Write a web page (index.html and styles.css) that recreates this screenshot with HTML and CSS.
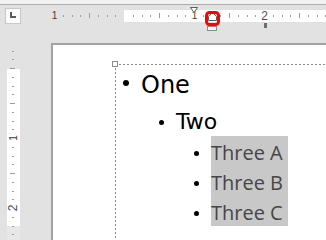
FILE: index.html
```html
<!DOCTYPE html>
<html lang="en">
<head>
    <meta charset="UTF-8">
    <title>Bullet list</title>
    <link rel="stylesheet" href="styles.css">
</head>
<body>
    <div class="titlebar"></div>

    <div class="ruler-row">
        <div class="corner">
            <div class="tab-selector"><span class="tab-l"></span></div>
        </div>
        <svg class="h-ruler" width="275" height="38" viewBox="51 5 275 38">
            <rect x="124" y="10" width="202" height="12" fill="#fff"/>
            <g fill="#9c9c9c">
                <rect x="63" y="15" width="1" height="2"/>
                <rect x="72" y="15" width="1" height="2"/>
                <rect x="80" y="15" width="1" height="2"/>
                <rect x="89" y="13" width="1" height="5"/>
                <rect x="98" y="15" width="1" height="2"/>
                <rect x="107" y="15" width="1" height="2"/>
                <rect x="115" y="15" width="1" height="2"/>
                <rect x="133" y="15" width="1" height="2"/>
                <rect x="142" y="15" width="1" height="2"/>
                <rect x="150" y="15" width="1" height="2"/>
                <rect x="159" y="13" width="1" height="5"/>
                <rect x="168" y="15" width="1" height="2"/>
                <rect x="177" y="15" width="1" height="2"/>
                <rect x="185" y="15" width="1" height="2"/>
                <rect x="203" y="15" width="1" height="2"/>
                <rect x="220" y="15" width="1" height="2"/>
                <rect x="229" y="13" width="1" height="5"/>
                <rect x="238" y="15" width="1" height="2"/>
                <rect x="247" y="15" width="1" height="2"/>
                <rect x="255" y="15" width="1" height="2"/>
                <rect x="273" y="15" width="1" height="2"/>
                <rect x="282" y="15" width="1" height="2"/>
                <rect x="290" y="15" width="1" height="2"/>
                <rect x="299" y="13" width="1" height="5"/>
                <rect x="308" y="15" width="1" height="2"/>
                <rect x="317" y="15" width="1" height="2"/>
                <rect x="325" y="15" width="1" height="2"/>
            </g>
            <g class="ruler-digits" text-anchor="middle">
                <text class="digit-one" x="54.5" y="19">1</text>
                <text class="digit-one" x="194.5" y="19">1</text>
                <text x="264.5" y="20">2</text>
            </g>
            <!-- first line indent -->
            <polygon points="190.5,7.5 197.5,7.5 194,12.5" fill="#fff" stroke="#5e5e5e"/>
            <!-- hanging indent, highlighted -->
            <polygon points="208.5,20.5 208.5,16.5 212.5,12.5 216.5,16.5 216.5,20.5" fill="#fff" stroke="#5e5e5e"/>
            <rect x="207.5" y="26.5" width="9" height="4" fill="#f4f4f4" stroke="#8a8a8a"/>
            <rect x="206.5" y="12.5" width="12" height="12" rx="3" fill="none" stroke="#f00" stroke-width="3"/>
            <rect x="264" y="23" width="3" height="5" fill="#6e6e6e"/>
        </svg>
    </div>

    <div class="workspace">
        <svg class="v-ruler" width="51" height="197" viewBox="0 43 51 197">
            <rect x="7" y="69" width="13" height="157" fill="#fff"/>
            <rect x="7" y="226" width="13" height="14" fill="#e7e7e7"/>
            <g fill="#9c9c9c">
                <rect x="12" y="51" width="2" height="1"/>
                <rect x="12" y="59" width="2" height="1"/>
                <rect x="10" y="68" width="5" height="1"/>
                <rect x="12" y="77" width="2" height="1"/>
                <rect x="12" y="86" width="2" height="1"/>
                <rect x="12" y="94" width="2" height="1"/>
                <rect x="10" y="103" width="5" height="1"/>
                <rect x="12" y="112" width="2" height="1"/>
                <rect x="12" y="121" width="2" height="1"/>
                <rect x="12" y="129" width="2" height="1"/>
                <rect x="12" y="147" width="2" height="1"/>
                <rect x="12" y="156" width="2" height="1"/>
                <rect x="12" y="164" width="2" height="1"/>
                <rect x="10" y="173" width="5" height="1"/>
                <rect x="12" y="182" width="2" height="1"/>
                <rect x="12" y="191" width="2" height="1"/>
                <rect x="12" y="199" width="2" height="1"/>
                <rect x="12" y="217" width="2" height="1"/>
                <rect x="12" y="226" width="2" height="1"/>
                <rect x="12" y="234" width="2" height="1"/>
            </g>
            <g class="ruler-digits" text-anchor="middle">
                <text class="digit-one" x="13" y="141.5" transform="rotate(-90 13 138)">1</text>
                <text x="13" y="212" transform="rotate(-90 13 208)">2</text>
            </g>
        </svg>

        <div class="page">
            <div class="text-box">
                <span class="handle"></span>

                <div class="item level-1">
                    <span class="dot"></span>
                    <span class="label">One</span>
                </div>
                <div class="item level-2">
                    <span class="dot"></span>
                    <span class="label">Two</span>
                </div>
                <div class="item level-3">
                    <span class="dot"></span>
                    <span class="label">Three A</span>
                </div>
                <div class="item level-3">
                    <span class="dot"></span>
                    <span class="label">Three B</span>
                </div>
                <div class="item level-3">
                    <span class="dot"></span>
                    <span class="label">Three C</span>
                </div>
            </div>
        </div>
    </div>
</body>
</html>
```

FILE: styles.css
```css
body {
    margin: 0;
    width: 326px;
    height: 240px;
    overflow: hidden;
    background-color: #e2e2e2;
    font-family: "DejaVu Sans", sans-serif;
}

.titlebar {
    height: 4px;
    background-color: #f1f1f1;
    border-bottom: 1px solid #ababab;
}

.ruler-row {
    display: flex;
    height: 38px;
}

.corner {
    width: 51px;
    flex: none;
}

.tab-selector {
    width: 16px;
    height: 16px;
    box-sizing: border-box;
    margin: 3px 0 0 5px;
    padding: 3px 0 0 4px;
    border: 1px solid #c8c8c8;
    background-color: #fbfbfb;
}

.tab-l {
    display: block;
    width: 6px;
    height: 6px;
    box-sizing: border-box;
    border-left: 2px solid #5a5a5a;
    border-bottom: 2px solid #5a5a5a;
}

.h-ruler,
.v-ruler {
    display: block;
    flex: none;
}

.ruler-digits {
    font-family: "Liberation Sans", sans-serif;
    font-size: 12px;
    fill: #505050;
}

.ruler-digits .digit-one {
    font-size: 10px;
    fill: #3c3c3c;
}

.workspace {
    display: flex;
    height: 197px;
    overflow: hidden;
}

.page {
    flex: 1;
    background-color: #fff;
    border-top: 2px solid #a3a3a3;
    border-left: 2px solid #a3a3a3;
}

.text-box {
    position: relative;
    height: 170px;
    margin: 19px 0 0 62px;
    padding-top: 6px;
    background:
        repeating-linear-gradient(to right, #8c8c8c 0 2px, transparent 2px 4px) 0 0 / 100% 1px no-repeat,
        repeating-linear-gradient(to bottom, #8c8c8c 0 2px, transparent 2px 4px) 0 0 / 1px 100% no-repeat;
}

.handle {
    position: absolute;
    left: -3px;
    top: -3px;
    width: 6px;
    height: 6px;
    box-sizing: border-box;
    border: 1px solid #8c8c8c;
    background-color: #fff;
}

.item {
    display: flex;
    align-items: flex-start;
    white-space: nowrap;
}

.dot {
    flex: none;
    border-radius: 50%;
    background-color: #000;
}

.label {
    margin-left: 12px;
}

.level-1 {
    height: 30px;
    font-size: 24px;
    line-height: 30px;
    color: #000;
}

.level-1 .dot {
    width: 6px;
    height: 6px;
    margin: 10px 0 0 8px;
}

.level-2 {
    height: 28px;
    margin-top: 8px;
    font-size: 22px;
    line-height: 28px;
    color: #000;
}

.level-2 .dot {
    width: 5px;
    height: 5px;
    margin: 12px 0 0 44px;
}

.level-3 {
    height: 30px;
    font-family: "Open Sans", sans-serif;
    font-size: 20px;
    line-height: 34px;
    color: #464646;
}

.level-3 .dot {
    width: 5px;
    height: 5px;
    margin: 15px 0 0 79px;
}

.level-3 .label {
    height: 30px;
    padding-right: 5px;
    background-color: #c8c8c8;
}
```
